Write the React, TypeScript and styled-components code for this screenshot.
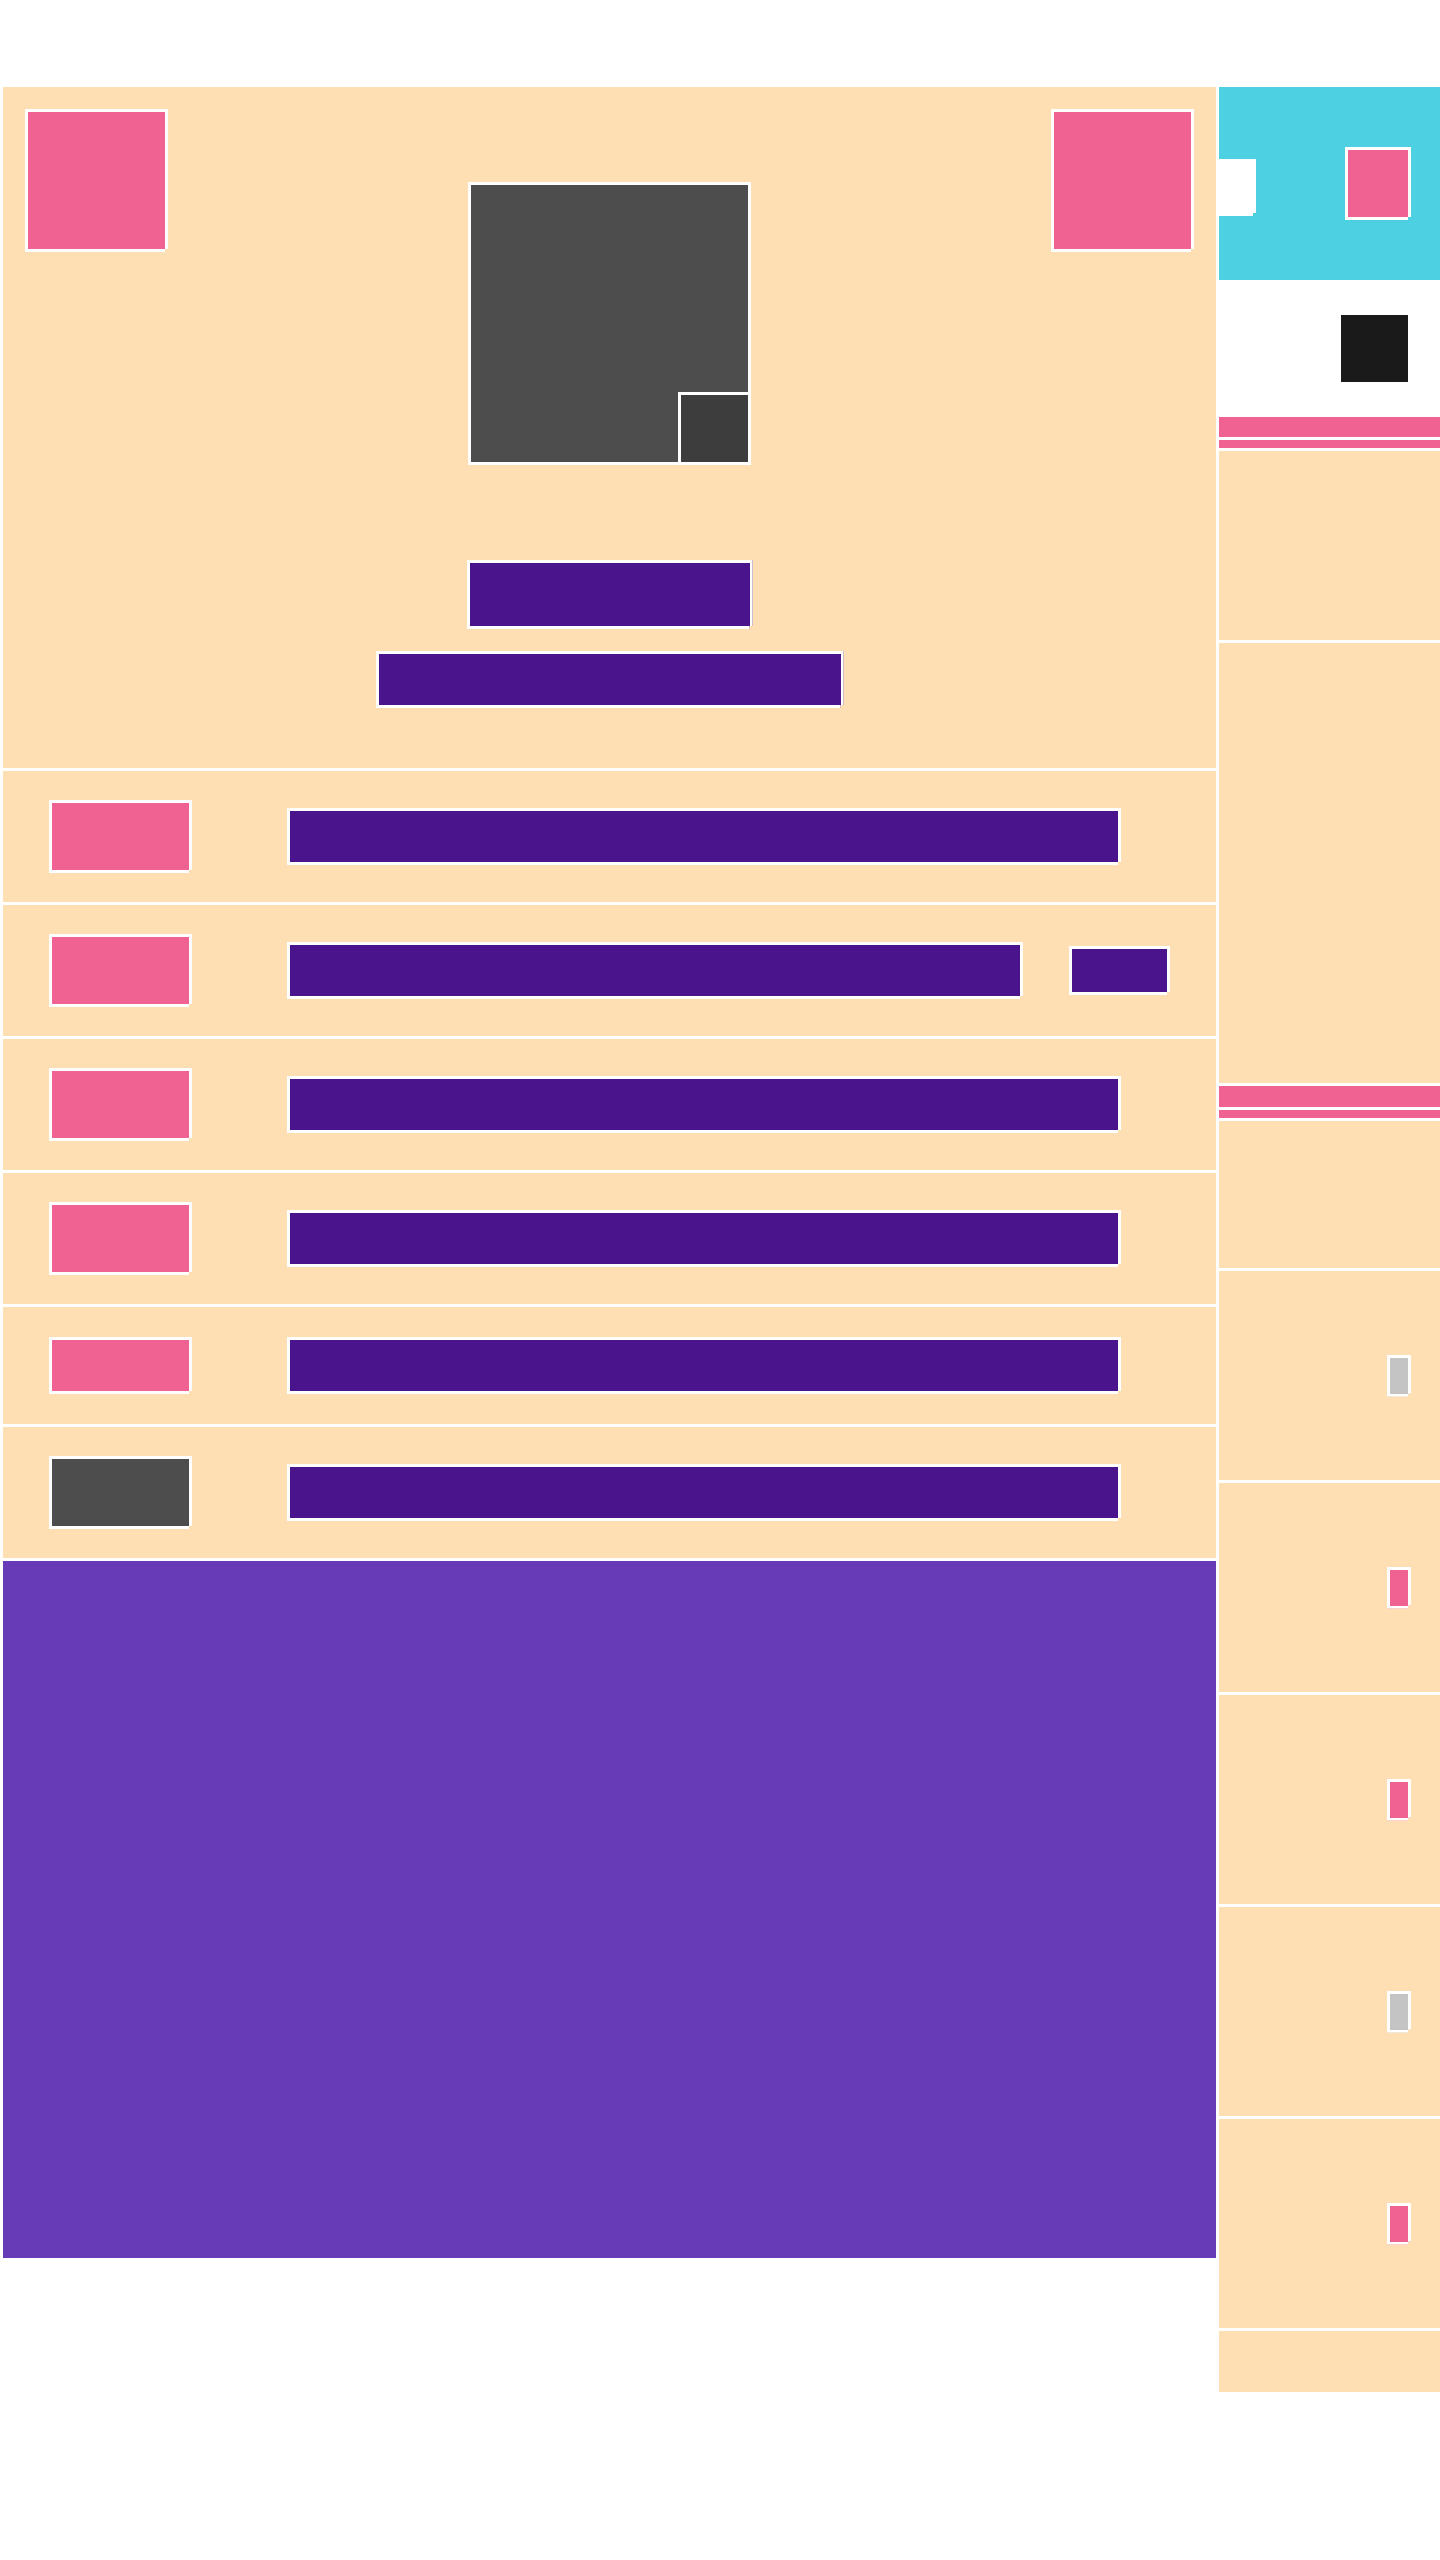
import React from "react";
import styled, { createGlobalStyle } from "styled-components";

const C = {
  peach: "#FEDFB3",
  pink: "#F06292",
  indigo: "#4A148C",
  violet: "#673AB7",
  cyan: "#4DD0E1",
  slate: "#4D4D4D",
  slateDark: "#3D3D3D",
  ink: "#1A1A1A",
  silver: "#C4C4C4",
};

const GlobalStyle = createGlobalStyle`
  html, body { margin: 0; padding: 0; background: #ffffff; }
  body { font-family: "Liberation Sans", Arial, sans-serif; }
  * { box-sizing: border-box; }
`;

const Page = styled.div`
  width: 1440px;
  display: flex;
  align-items: flex-start;
  gap: 3px;
  padding: 87px 0 0 3px;
  background: #ffffff;
`;

const Block = styled.div<{ $w: number; $h: number; $bg: string }>`
  flex: none;
  width: ${(p) => p.$w}px;
  height: ${(p) => p.$h}px;
  background: ${(p) => p.$bg};
  border: 3px solid #ffffff;
  clip-path: polygon(
    0 0,
    100% 0,
    100% calc(100% - 3px),
    calc(100% - 3px) calc(100% - 3px),
    calc(100% - 3px) 100%,
    0 100%
  );
`;

/* ---------- main column ---------- */

const Main = styled.main`
  width: 1213px;
  display: flex;
  flex-direction: column;
  gap: 3px;
`;

const Hero = styled.section`
  height: 681px;
  background: ${C.peach};
  padding: 22px;
  display: grid;
  grid-template-columns: 143px 1fr 143px;
  align-items: start;
`;

const HeroCenter = styled.div`
  display: flex;
  flex-direction: column;
  align-items: center;
  padding-top: 73px;
`;

const Cover = styled(Block)`
  position: relative;
  clip-path: none;
`;

const CoverBadge = styled(Block)`
  position: absolute;
  right: -3px;
  bottom: -3px;
`;

const Title = styled(Block)`
  margin-top: 95px;
`;

const Subtitle = styled(Block)`
  margin-top: 22px;
`;

const ListRow = styled.div<{ $h: number }>`
  height: ${(p) => p.$h}px;
  background: ${C.peach};
  display: flex;
  align-items: center;
  padding-left: 46px;
`;

const RowBar = styled(Block)`
  margin-left: 95px;
`;

const RowChip = styled(Block)`
  margin-left: 46px;
`;

const Footer = styled.section`
  height: 697px;
  background: ${C.violet};
`;

/* ---------- sidebar ---------- */

const Side = styled.aside`
  width: 221px;
  display: flex;
  flex-direction: column;
  gap: 3px;
`;

const SideHeader = styled.div`
  height: 193px;
  background: ${C.cyan};
  display: flex;
  align-items: center;
  justify-content: space-between;
  padding-right: 29px;
`;

const BackTab = styled(Block)`
  margin-top: 8px;
`;

const SideBlank = styled.div`
  height: 131px;
  background: #ffffff;
  display: flex;
  align-items: center;
  justify-content: flex-end;
  padding-right: 29px;
`;

const Stripe = styled.div<{ $h: number }>`
  height: ${(p) => p.$h}px;
  background: ${C.pink};
`;

const Card = styled.div<{ $h: number }>`
  height: ${(p) => p.$h}px;
  background: ${C.peach};
  display: flex;
  align-items: center;
  justify-content: flex-end;
  padding-right: 29px;
`;

type Row = { thumb: string; h: number; thumbH: number; chip?: boolean };

const rows: Row[] = [
  { thumb: C.pink, h: 131, thumbH: 73 },
  { thumb: C.pink, h: 131, thumbH: 73, chip: true },
  { thumb: C.pink, h: 131, thumbH: 73 },
  { thumb: C.pink, h: 131, thumbH: 73 },
  { thumb: C.pink, h: 117, thumbH: 57 },
  { thumb: C.slate, h: 131, thumbH: 73 },
];

const toggles = [C.silver, C.pink, C.pink, C.silver, C.pink];

export default function App() {
  return (
    <>
      <GlobalStyle />
      <Page>
        <Main>
          <Hero>
            <Block $w={143} $h={143} $bg={C.pink} />
            <HeroCenter>
              <Cover $w={283} $h={283} $bg={C.slate}>
                <CoverBadge $w={73} $h={73} $bg={C.slateDark} />
              </Cover>
              <Title $w={286} $h={69} $bg={C.indigo} />
              <Subtitle $w={468} $h={57} $bg={C.indigo} />
            </HeroCenter>
            <Block $w={143} $h={143} $bg={C.pink} />
          </Hero>
          {rows.map((r, i) => (
            <ListRow key={i} $h={r.h}>
              <Block $w={143} $h={r.thumbH} $bg={r.thumb} />
              {r.chip ? (
                <>
                  <RowBar $w={736} $h={57} $bg={C.indigo} />
                  <RowChip $w={101} $h={49} $bg={C.indigo} />
                </>
              ) : (
                <RowBar $w={834} $h={57} $bg={C.indigo} />
              )}
            </ListRow>
          ))}
          <Footer />
        </Main>
        <Side>
          <SideHeader>
            <BackTab $w={37} $h={57} $bg="#ffffff" />
            <Block $w={66} $h={73} $bg={C.pink} />
          </SideHeader>
          <SideBlank>
            <Block $w={73} $h={73} $bg={C.ink} />
          </SideBlank>
          <Stripe $h={20} />
          <Stripe $h={8} />
          <Card $h={189} />
          <Card $h={440} />
          <Stripe $h={21} />
          <Stripe $h={8} />
          <Card $h={147} />
          {toggles.map((t, i) => (
            <Card key={i} $h={209}>
              <Block $w={24} $h={42} $bg={t} />
            </Card>
          ))}
          <Card $h={61} />
        </Side>
      </Page>
    </>
  );
}
